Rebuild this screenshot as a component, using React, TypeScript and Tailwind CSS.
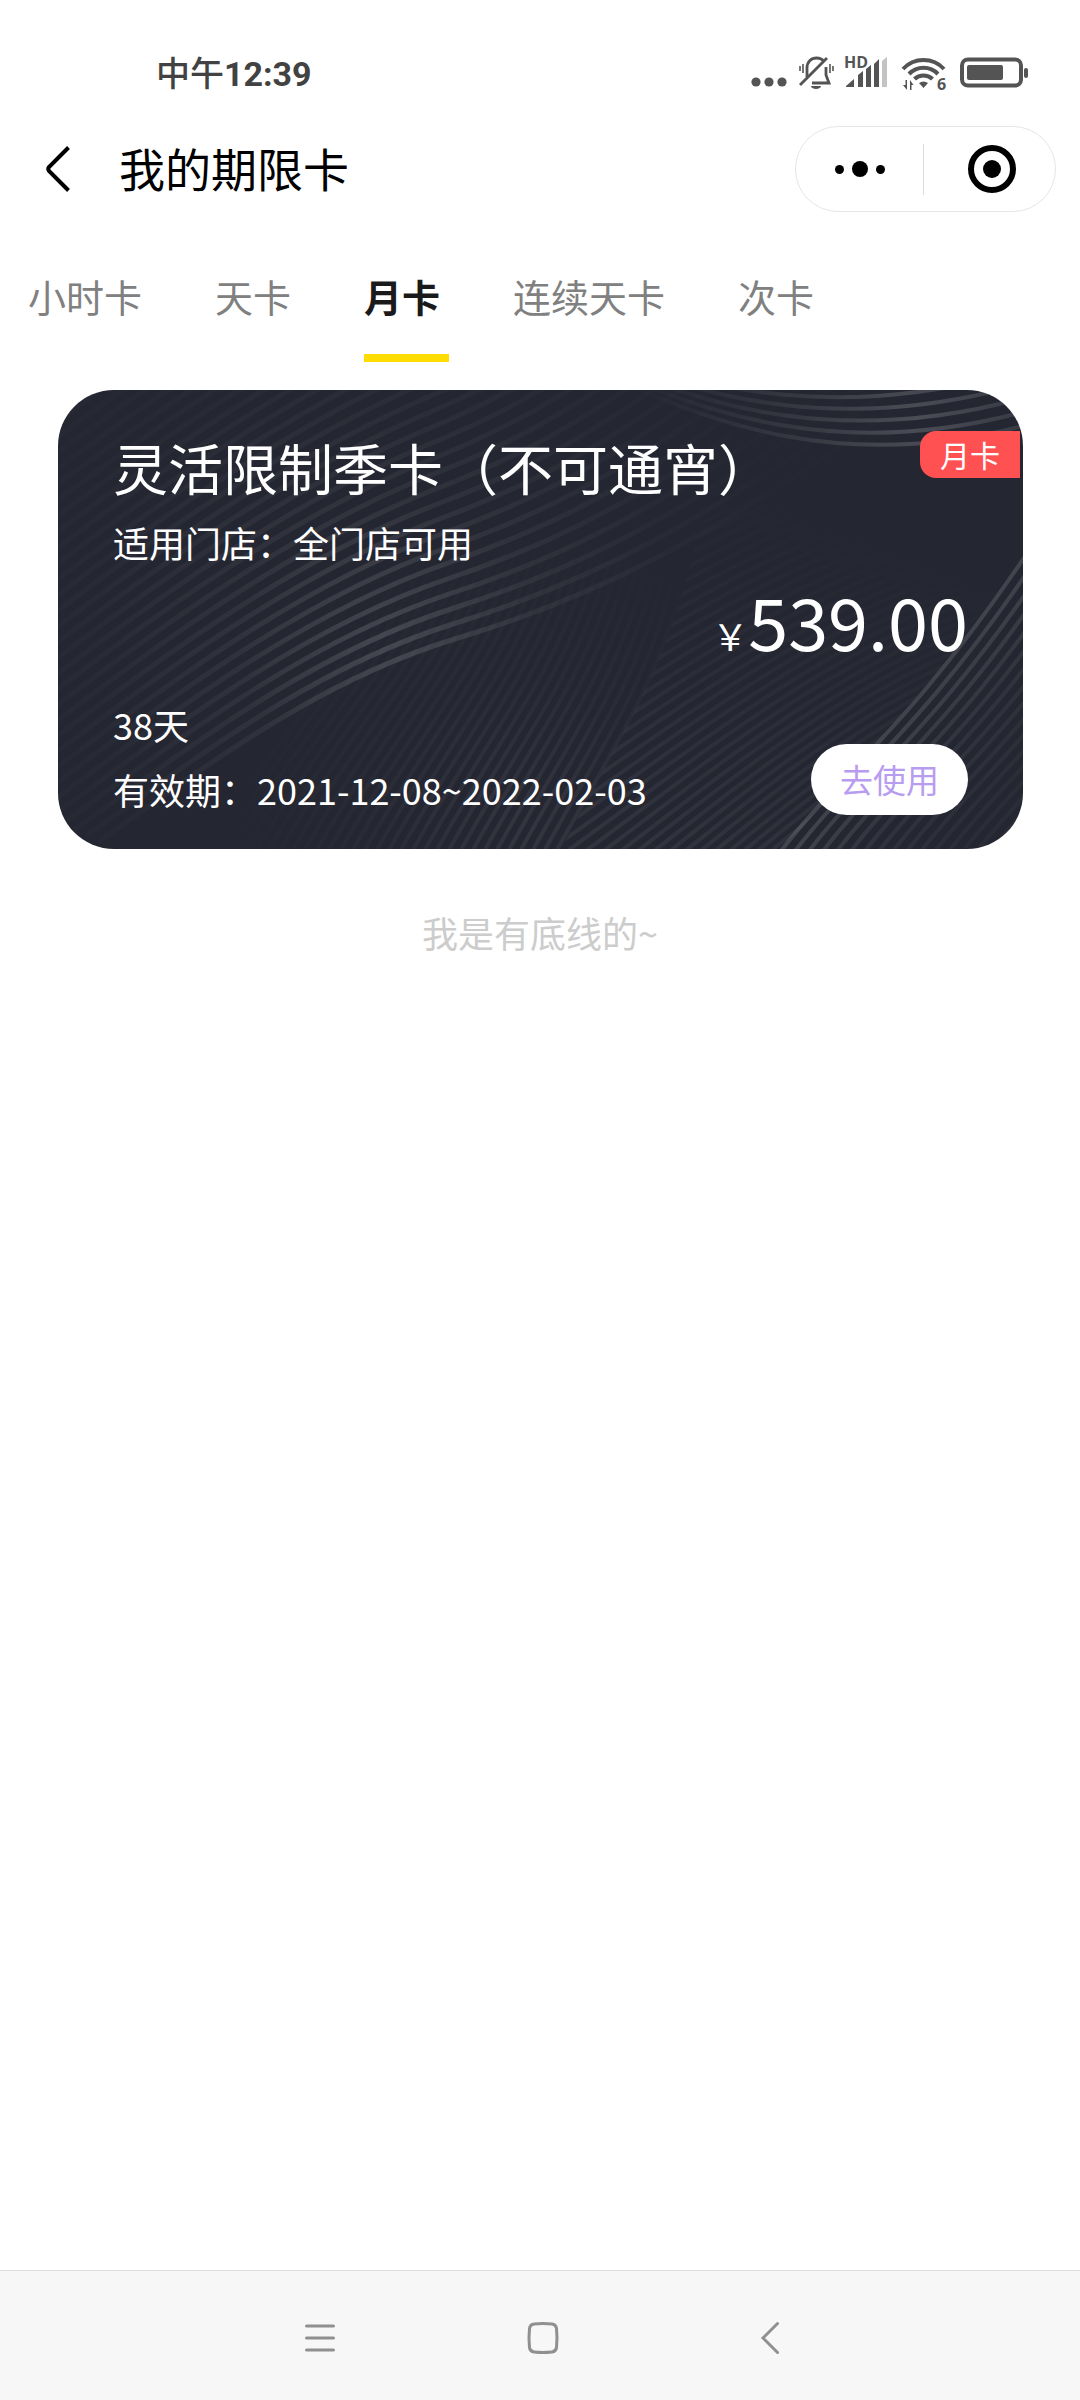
import React from 'react';
import clsx from 'clsx';

interface Pass {
  name: string;
  tag: string;
  store: string;
  price: string;
  days: string;
  period: string;
}

const TABS = ['小时卡', '天卡', '月卡', '连续天卡', '次卡'];

const PASS: Pass = {
  name: '灵活限制季卡（不可通宵）',
  tag: '月卡',
  store: '适用门店：全门店可用',
  price: '539.00',
  days: '38天',
  period: '有效期：2021-12-08~2022-02-03',
};

function range(count: number) {
  return Array.from({ length: count }, (_, i) => i);
}

function StatusIcons() {
  return (
    <svg viewBox="0 -10 280 60" className="h-[60px] w-[280px] text-[#545454]" fill="currentColor" aria-hidden="true">
      {/* more dots */}
      <circle cx="5" cy="29" r="4.6" />
      <circle cx="18" cy="29" r="4.6" />
      <circle cx="31" cy="29" r="4.6" />
      {/* muted bell */}
      <g fill="none" stroke="currentColor" strokeWidth="2.8">
        <path d="M56 24V15c0-6 4-10 9.500-10 3 0 5.500 1 7 3M75 14v8l3 8H61" />
        <path d="M49 32L76 5" />
        <path d="M52 11v9M49 13v5M79 11v9M82 13v5" strokeWidth="1.600" />
      </g>
      <path d="M60 33h10a5 3 0 0 1-10 0z" />
      {/* signal */}
      <text x="93" y="15" className="font-['Open_Sans',sans-serif] text-[16px] font-bold">HD</text>
      <path d="M95 34v-1l8-7v8zM107 34V22l5-4v16zM115 34V16l5-4v22zM123 34V11l5-5v28z" />
      <path d="M131 34V8l5-4v30z" opacity=".35" />
      {/* wifi */}
      <g fill="none" stroke="currentColor" strokeWidth="4">
        <path d="M152 16a28 28 0 0 1 41 0" />
        <path d="M158 21a20 20 0 0 1 29 0" />
        <path d="M163.500 26a13 13 0 0 1 18 0" />
      </g>
      <path d="M168 30q4.500-3 9 0l-4.500 5z" />
      <path d="M152 32h2.500v-5H156v10zM159 37v-10l3.500 5h-2v5z" />
      <text x="186" y="37" className="font-['Open_Sans',sans-serif] text-[16px] font-bold">6</text>
      {/* battery */}
      <rect x="211" y="6.500" width="59" height="26" rx="6" fill="none" stroke="currentColor" strokeWidth="4" />
      <rect x="216" y="12" width="36" height="15" rx="2" />
      <rect x="273" y="15" width="4" height="10" rx="2" />
    </svg>
  );
}

function StatusBar() {
  return (
    <div className="flex h-[110px] items-center justify-between pt-9 pl-[156px] pr-[49px] leading-[48px] text-[#424242]">
      <span className="text-[34px] font-medium">
        中午<span className="font-['Roboto',sans-serif] font-bold">12:39</span>
      </span>
      <StatusIcons />
    </div>
  );
}

function Header() {
  return (
    <header className="flex h-[118px] items-center pl-[42px] pr-6">
      <button aria-label="返回" className="mr-[43px]">
        <svg viewBox="0 0 34 48" className="h-12 w-[34px]" fill="none" stroke="currentColor" strokeWidth="4">
          <path d="M26.500 2.500L7 22q-1.500 2 0 4l19.500 19.500" />
        </svg>
      </button>
      <h1 className="pb-1 text-[46px] leading-[64px]">我的期限卡</h1>
      <div className="ml-auto flex h-[86px] w-[261px] items-center rounded-full border border-[#e6e6e6]">
        <button aria-label="更多" className="flex flex-1 items-center justify-center gap-2">
          <span className="size-[9px] rounded-full bg-black" />
          <span className="size-4 rounded-full bg-black" />
          <span className="size-[9px] rounded-full bg-black" />
        </button>
        <span className="h-[51px] w-px bg-[#dcdcdc]" />
        <button aria-label="关闭" className="flex flex-1 justify-center pl-1">
          <span className="flex size-12 items-center justify-center rounded-full border-6 border-black">
            <span className="size-[18px] rounded-full bg-black" />
          </span>
        </button>
      </div>
    </header>
  );
}

function Tabs({ active }: { active: string }) {
  return (
    <nav className="flex gap-[73px] pl-7 text-[38px] leading-[56px]">
      {TABS.map((tab) => (
        <button
          key={tab}
          className={clsx(
            'relative pt-10 pb-[38px] whitespace-nowrap',
            tab === active ? 'font-bold text-[#1a1a1a]' : 'text-[#808080]',
          )}
        >
          {tab}
          {tab === active && <span className="absolute bottom-0 left-0 h-2 w-[85px] bg-[#ffdd00]" />}
        </button>
      ))}
    </nav>
  );
}

// Wavy line groups behind the card text
function CardPattern() {
  return (
    <svg
      viewBox="0 0 965 459"
      preserveAspectRatio="none"
      className="absolute inset-0 h-full w-full"
      fill="none"
      aria-hidden="true"
    >
      <defs>
        <radialGradient id="sweep" gradientUnits="userSpaceOnUse" cx="330" cy="255" r="420">
          <stop offset="0" stopColor="#fff" stopOpacity=".15" />
          <stop offset=".35" stopColor="#fff" stopOpacity=".055" />
          <stop offset=".7" stopColor="#fff" stopOpacity=".02" />
          <stop offset="1" stopColor="#fff" stopOpacity=".005" />
        </radialGradient>
        <radialGradient id="arc" gradientUnits="userSpaceOnUse" cx="860" cy="30" r="290">
          <stop offset="0" stopColor="#fff" stopOpacity=".18" />
          <stop offset=".4" stopColor="#fff" stopOpacity=".08" />
          <stop offset="1" stopColor="#fff" stopOpacity="0" />
        </radialGradient>
        <radialGradient id="steep" gradientUnits="userSpaceOnUse" cx="470" cy="440" r="300">
          <stop offset="0" stopColor="#fff" stopOpacity=".07" />
          <stop offset=".5" stopColor="#fff" stopOpacity=".025" />
          <stop offset="1" stopColor="#fff" stopOpacity="0" />
        </radialGradient>
        <linearGradient id="fan" gradientUnits="userSpaceOnUse" x1="600" y1="459" x2="740" y2="110">
          <stop offset="0" stopColor="#fff" stopOpacity=".06" />
          <stop offset=".5" stopColor="#fff" stopOpacity=".03" />
          <stop offset="1" stopColor="#fff" stopOpacity="0" />
        </linearGradient>
        <linearGradient id="corner" gradientUnits="userSpaceOnUse" x1="840" y1="310" x2="950" y2="400">
          <stop offset="0" stopColor="#fff" stopOpacity=".15" />
          <stop offset=".5" stopColor="#fff" stopOpacity=".06" />
          <stop offset="1" stopColor="#fff" stopOpacity=".03" />
        </linearGradient>
        <clipPath id="fanArea">
          <path d="M500 465C560 350 600 290 625 200L665 60H965V168L895 263L819 353L725 459z" />
        </clipPath>
      </defs>
      <g stroke="url(#sweep)" strokeWidth="5">
        {range(30).map((i) => (
          <path
            key={i}
            d={`M${40 - i * 12} ${452 - i * 6}C${150 - i * 8} ${375 - i * 10} ${260 - i * 4} ${290 - i * 13} ${400 - i * 2} ${248 - i * 15}S${650 - i * 4} ${150 - i * 18} ${850 - i * 4} ${10 - i * 20}`}
          />
        ))}
      </g>
      <g stroke="url(#arc)" strokeWidth="4">
        {range(6).map((i) => (
          <path key={i} d={`M520 ${-30 - i * 5}C650 ${38 - i * 8} 790 ${82 - i * 13} 965 ${36 - i * 14}`} />
        ))}
      </g>
      <g stroke="url(#steep)" strokeWidth="4">
        {range(30).map((i) => (
          <path key={i} d={`M${496 - i * 12} 465C${560 - i * 12} 350 ${600 - i * 11} 290 ${622 - i * 10} 200L${665 - i * 9} 60`} />
        ))}
      </g>
      <g stroke="url(#fan)" strokeWidth="4" clipPath="url(#fanArea)">
        {range(36).map((i) => {
          const n = i - 14;
          return (
            <path
              key={i}
              d={`M440 ${524 - n * 14}C620 ${400 - n * 13} 780 ${250 - n * 10} 965 ${205 - n * 8}`}
            />
          );
        })}
      </g>
      <g stroke="url(#corner)" strokeWidth="4">
        {range(20).map((i) => (
          <path key={i} d={`M${720 + i * 14} 465C${780 + i * 14} 385 ${850 + i * 14} 340 ${968 + i * 13} 165`} />
        ))}
      </g>
    </svg>
  );
}

function PassCard({ pass }: { pass: Pass }) {
  return (
    <article className="relative mr-[57px] ml-[58px] overflow-hidden rounded-[56px] bg-[#242631] px-[55px] pt-10 pb-[34px] text-[36px] leading-[48px] text-white">
      <CardPattern />
      <span className="absolute top-[41px] right-[3px] rounded-l-2xl bg-[#ff5151] px-5 text-[30px] leading-[47px]">
        {pass.tag}
      </span>
      <div className="relative">
        <h2 className="text-[55px] leading-[72px]">{pass.name}</h2>
        <p className="mt-4">{pass.store}</p>
        <p className="mt-[6px] flex items-baseline justify-end">
          <span className="text-[36px]">￥</span>
          <span className="text-[72px] leading-[96px]">{pass.price}</span>
        </p>
        <div className="mt-8 flex items-end justify-between">
          <div className="pb-0.5">
            <p>{pass.days}</p>
            <p className="mt-[17px]">{pass.period}</p>
          </div>
          <button className="rounded-full bg-white px-[29px] text-[33px] leading-[71px] text-[#b89cf0]">去使用</button>
        </div>
      </div>
    </article>
  );
}

function SystemNav() {
  return (
    <footer className="mt-auto flex h-[130px] items-center justify-center border-t border-[#dedede] bg-[#f7f7f7] pt-1 text-[#909090]">
      <div className="flex items-center gap-[185px] pl-1.5">
        <button aria-label="最近任务">
          <svg viewBox="0 0 40 40" className="size-10" fill="none" stroke="currentColor" strokeWidth="3" strokeLinecap="round">
            <path d="M8.500 8h27M8.500 20h27M8.500 32h27" />
          </svg>
        </button>
        <button aria-label="主屏幕">
          <svg viewBox="0 0 40 40" className="size-10" fill="none" stroke="currentColor" strokeWidth="3">
            <path d="M11 6q9-1 18 0 4 .5 4.500 4.500 1 9.500 0 19-.5 4-4.500 4.500-9 1-18 0-4-.5-4.500-4.500-1-9.500 0-19 .5-4 4.500-4.500z" />
          </svg>
        </button>
        <button aria-label="返回上一页">
          <svg viewBox="0 0 40 40" className="size-10" fill="none" stroke="currentColor" strokeWidth="3" strokeLinecap="round">
            <path d="M29.500 5.500L15 20l14.500 14.500" />
          </svg>
        </button>
      </div>
    </footer>
  );
}

export default function App() {
  return (
    <div className="flex min-h-screen flex-col bg-white font-['Noto_Sans_CJK_SC',sans-serif] text-black">
      <StatusBar />
      <Header />
      <Tabs active="月卡" />
      <main className="pt-7">
        <PassCard pass={PASS} />
        <p className="pt-[59px] text-center text-[36px] leading-[48px] text-[#cccccc]">我是有底线的~</p>
      </main>
      <SystemNav />
    </div>
  );
}
